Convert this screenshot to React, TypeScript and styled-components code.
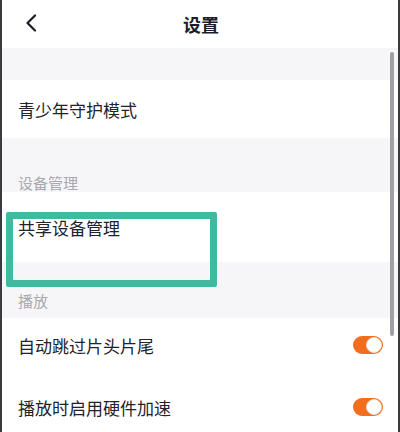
import React from 'react'
import styled, { createGlobalStyle } from 'styled-components'

const Global = createGlobalStyle`
  html, body {
    margin: 0;
    padding: 0;
    background: #ffffff;
    font-family: "Noto Sans CJK SC", "Noto Sans", sans-serif;
  }
`

const sections = [
  { label: '设备管理', height: 54, pad: 0, rows: [{ text: '共享设备管理', height: 70 }] },
  {
    label: '播放',
    height: 56,
    pad: 8,
    rows: [
      { text: '自动跳过片头片尾', height: 54, toggle: true },
      { text: '播放时启用硬件加速', height: 70, toggle: true },
    ],
  },
]

export default function App() {
  return (
    <>
      <Global />
      <S.Screen>
        <S.Header>
          <S.Back>
            <svg width="14" height="18" viewBox="0 0 14 18">
              <path d="M11 1.5 L3.5 9 L11 16.5" fill="none" stroke="#1c1c24" strokeWidth="2.2" strokeLinecap="round" strokeLinejoin="round" />
            </svg>
          </S.Back>
          <S.Title>设置</S.Title>
        </S.Header>
        <S.Band />
        <S.Row $h={58}>
          <S.RowText>青少年守护模式</S.RowText>
        </S.Row>
        {sections.map((sec) => (
          <React.Fragment key={sec.label}>
            <S.SectionHead $h={sec.height} $pad={sec.pad}>
              {sec.label}
            </S.SectionHead>
            {sec.rows.map((r) => (
              <S.Row key={r.text} $h={r.height}>
                <S.RowText>{r.text}</S.RowText>
                {r.toggle && (
                  <S.Toggle>
                    <S.Knob />
                  </S.Toggle>
                )}
              </S.Row>
            ))}
          </React.Fragment>
        ))}
        <S.Scrollbar />
        <S.Highlight />
      </S.Screen>
    </>
  )
}

const S = {
  Screen: styled.div`
    position: relative;
    display: flex;
    flex-direction: column;
    width: 400px;
    height: 432px;
    box-sizing: border-box;
    overflow: hidden;
    border-left: 2px solid #3a3a3e;
    border-right: 2px solid #3a3a3e;
    background: #ffffff;
  `,
  Header: styled.div`
    position: relative;
    display: flex;
    align-items: center;
    justify-content: center;
    flex: 0 0 48px;
    background: #ffffff;
  `,
  Back: styled.div`
    position: absolute;
    left: 22px;
    top: 14px;
    display: flex;
  `,
  Title: styled.div`
    font-size: 18px;
    font-weight: 700;
    color: #1c1c2a;
    margin-left: 2px;
  `,
  Band: styled.div`
    flex: 0 0 32px;
    background: #f6f6f8;
  `,
  Row: styled.div<{ $h: number }>`
    display: flex;
    align-items: center;
    justify-content: space-between;
    flex: 0 0 ${(p) => p.$h}px;
    padding: 0 15px 0 16px;
    background: #ffffff;
  `,
  RowText: styled.div`
    font-size: 17px;
    color: #222228;
  `,
  SectionHead: styled.div<{ $h: number; $pad: number }>`
    display: flex;
    align-items: flex-end;
    flex: 0 0 ${(p) => p.$h}px;
    box-sizing: border-box;
    padding: 0 0 ${(p) => p.$pad}px 16px;
    background: #f6f6f8;
    font-size: 15px;
    line-height: 18px;
    color: #a8a8ae;
  `,
  Toggle: styled.div`
    display: flex;
    align-items: center;
    justify-content: flex-end;
    width: 30px;
    height: 18px;
    box-sizing: border-box;
    padding: 1px;
    border-radius: 9px;
    background: #f26d1e;
  `,
  Knob: styled.div`
    width: 16px;
    height: 16px;
    box-sizing: border-box;
    border-radius: 50%;
    background: #ffffff;
    border: 1px solid #e6e0da;
  `,
  Scrollbar: styled.div`
    position: absolute;
    right: 4px;
    top: 52px;
    width: 4px;
    height: 284px;
    border-radius: 2px;
    background: #a0a0a4;
  `,
  Highlight: styled.div`
    position: absolute;
    left: 4px;
    top: 212px;
    width: 211px;
    height: 75px;
    box-sizing: border-box;
    border: 7px solid #3fba9f;
    border-radius: 2px;
  `,
}
